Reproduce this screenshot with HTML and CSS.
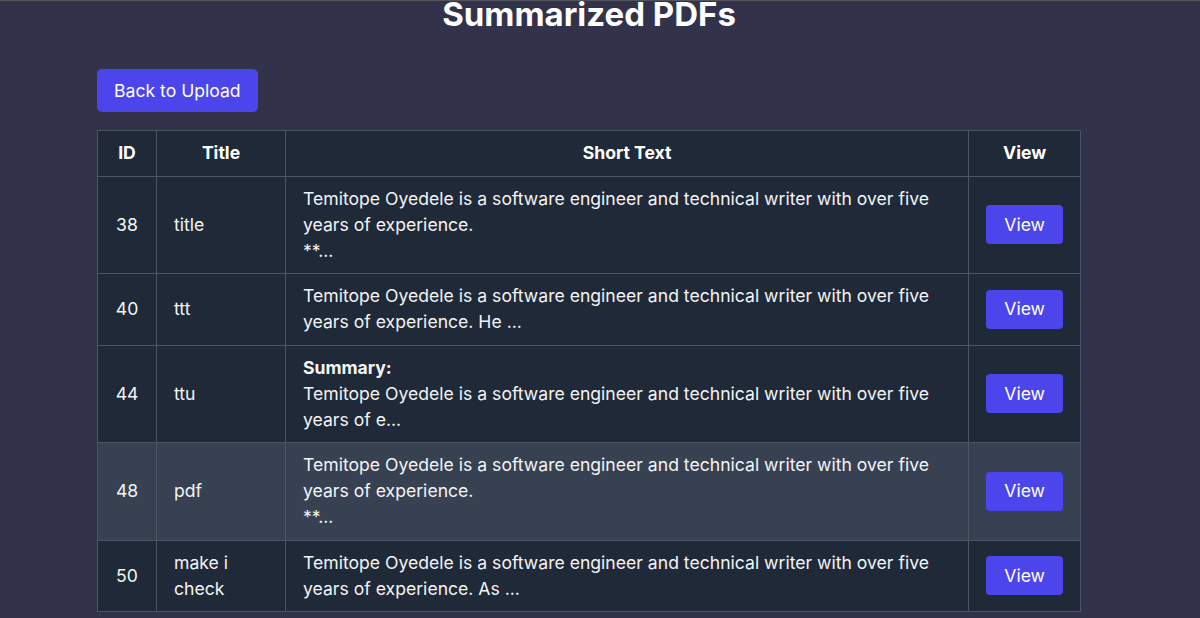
FILE: index.html
```html
<!DOCTYPE html>
<html lang="en">
<head>
<meta charset="utf-8">
<title>Summarized PDFs</title>
<link rel="stylesheet" href="styles.css">
</head>
<body>
<div class="page">
  <h1 class="title">Summarized PDFs</h1>
  <div class="content">
    <button class="btn back">Back to Upload</button>
    <table class="pdfs">
      <thead>
        <tr><th class="c-id">ID</th><th class="c-title">Title</th><th class="c-text">Short Text</th><th class="c-view">View</th></tr>
      </thead>
      <tbody>
        <tr>
          <td class="c-id">38</td><td class="c-title">title</td>
          <td class="c-text">Temitope Oyedele is a software engineer and technical writer with over five years of experience.<br>**...</td>
          <td class="c-view"><button class="btn view">View</button></td>
        </tr>
        <tr>
          <td class="c-id">40</td><td class="c-title">ttt</td>
          <td class="c-text">Temitope Oyedele is a software engineer and technical writer with over five years of experience. He ...</td>
          <td class="c-view"><button class="btn view">View</button></td>
        </tr>
        <tr>
          <td class="c-id">44</td><td class="c-title">ttu</td>
          <td class="c-text"><strong>Summary:</strong><br>Temitope Oyedele is a software engineer and technical writer with over five years of e...</td>
          <td class="c-view"><button class="btn view">View</button></td>
        </tr>
        <tr class="hover">
          <td class="c-id">48</td><td class="c-title">pdf</td>
          <td class="c-text">Temitope Oyedele is a software engineer and technical writer with over five years of experience.<br>**...</td>
          <td class="c-view"><button class="btn view">View</button></td>
        </tr>
        <tr>
          <td class="c-id">50</td><td class="c-title">make i check</td>
          <td class="c-text">Temitope Oyedele is a software engineer and technical writer with over five years of experience. As ...</td>
          <td class="c-view"><button class="btn view">View</button></td>
        </tr>
      </tbody>
    </table>
  </div>
</div>
</body>
</html>
```
FILE: styles.css
```css
html, body {
  margin: 0;
  padding: 0;
  height: 100%;
}
body {
  background: #32324b;
  border-top: 1px solid #54545f;
  box-sizing: border-box;
  font-family: Inter, "Noto Sans", sans-serif;
  color: #f3f4f6;
  overflow: hidden;
}
.page {
  width: 984px;
  padding-left: 97px;
}
.title {
  margin: -7px 0 0;
  font-size: 33px;
  line-height: 40px;
  font-weight: 700;
  text-align: center;
  color: #ffffff;
}
.content {
  margin-top: 35px;
  display: flex;
  flex-direction: column;
  align-items: flex-start;
  gap: 18px;
}
.btn {
  font-family: Inter, "Noto Sans", sans-serif;
  font-size: 17.6px;
  line-height: 26px;
  color: #ffffff;
  background: #4c45ec;
  border: none;
  cursor: pointer;
}
.back {
  padding: 8.5px 17px;
  border-radius: 5px;
}
.view {
  padding: 6.5px 18px;
  border-radius: 4px;
}
.pdfs {
  width: 984px;
  border-collapse: collapse;
  font-size: 17.6px;
  line-height: 26px;
  background: #1f2937;
  border: 1px solid #4b5563;
}
.pdfs th, .pdfs td {
  border: 1px solid #4b5563;
  padding: 9.25px 17px;
  vertical-align: middle;
}
.pdfs th {
  font-weight: 700;
  text-align: center;
  color: #ffffff;
}
.pdfs td {
  text-align: left;
}
.pdfs td.c-id, .pdfs td.c-view {
  text-align: center;
}
.c-id { width: 24px; }
.c-title { width: 94px; }
.c-view { width: 76px; }
.pdfs tr.hover td {
  background: #374151;
}
.pdfs strong {
  font-weight: 700;
}
```
